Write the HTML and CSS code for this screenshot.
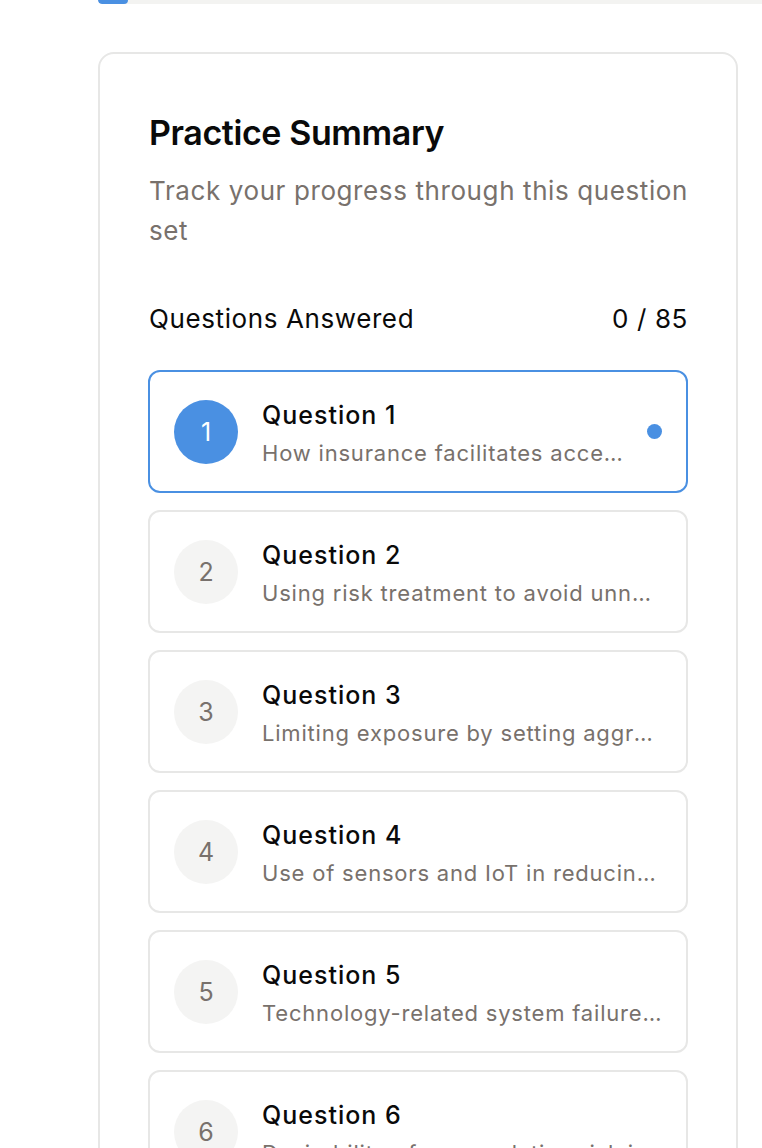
FILE: index.html
```html
<!DOCTYPE html>
<html lang="en">
<head>
<meta charset="utf-8">
<title>Practice Summary</title>
<link rel="stylesheet" href="styles.css">
</head>
<body>
<div class="page">
  <div class="progress"><div class="progress-fill" style="width: 30px"></div></div>
  <section class="card">
    <h2 class="card-title">Practice Summary</h2>
    <p class="card-sub">Track your progress through this question set</p>
    <div class="stat-row">
      <span>Questions Answered</span>
      <span>0 / 85</span>
    </div>
    <ul class="q-list">
      <li class="q-item active">
        <span class="q-num">1</span>
        <div class="q-text">
          <div class="q-title">Question 1</div>
          <div class="q-desc">How insurance facilitates access to credit and investment</div>
        </div>
        <span class="q-dot"></span>
      </li>
      <li class="q-item">
        <span class="q-num">2</span>
        <div class="q-text">
          <div class="q-title">Question 2</div>
          <div class="q-desc">Using risk treatment to avoid unnecessary losses</div>
        </div>
      </li>
      <li class="q-item">
        <span class="q-num">3</span>
        <div class="q-text">
          <div class="q-title">Question 3</div>
          <div class="q-desc">Limiting exposure by setting aggregate limits</div>
        </div>
      </li>
      <li class="q-item">
        <span class="q-num">4</span>
        <div class="q-text">
          <div class="q-title">Question 4</div>
          <div class="q-desc">Use of sensors and IoT in reducing losses</div>
        </div>
      </li>
      <li class="q-item">
        <span class="q-num">5</span>
        <div class="q-text">
          <div class="q-title">Question 5</div>
          <div class="q-desc">Technology-related system failures and outages</div>
        </div>
      </li>
      <li class="q-item">
        <span class="q-num">6</span>
        <div class="q-text">
          <div class="q-title">Question 6</div>
          <div class="q-desc">Desirability of accumulation risk in portfolios</div>
        </div>
      </li>
    </ul>
  </section>
</div>
</body>
</html>
```

FILE: styles.css
```css
* { box-sizing: border-box; }
html, body { margin: 0; padding: 0; background: #ffffff; }
body {
  font-family: Inter, "Noto Sans", sans-serif;
  color: #0a0a0a;
  overflow: hidden;
  height: 1148px;
}
.page {
  padding-left: 98px;
}
.progress {
  height: 8px;
  margin-top: -4px;
  background: #f3f3f1;
  border-radius: 4px 0 0 4px;
  overflow: hidden;
}
.progress-fill {
  height: 100%;
  background: #4a90e2;
  border-radius: 4px;
}
.card {
  width: 640px;
  margin-top: 48px;
  border: 2px solid #e7e7e6;
  border-radius: 16px;
  padding: 48px 48px 48px 49px;
}
.card-title {
  margin: 7px 0 0 0;
  font-size: 34px;
  line-height: 48px;
  font-weight: 600;
  letter-spacing: -0.4px;
}
.card-sub {
  margin: 14px 0 0 0;
  font-size: 26px;
  line-height: 40px;
  letter-spacing: 0.6px;
  color: #78716c;
}
.stat-row {
  margin-top: 50px;
  display: flex;
  justify-content: space-between;
  font-size: 26px;
  line-height: 36px;
  letter-spacing: 0.6px;
}
.q-list {
  list-style: none;
  margin: 33px 0 0 -1px;
  padding: 0;
  display: flex;
  flex-direction: column;
  gap: 17px;
}
.q-item {
  display: flex;
  align-items: center;
  gap: 24px;
  height: 123px;
  padding: 0 24px;
  border: 2px solid #e7e7e6;
  border-radius: 12px;
}
.q-item.active {
  border-color: #4a90e2;
}
.q-num {
  flex: none;
  width: 64px;
  height: 64px;
  border-radius: 50%;
  background: #f4f4f3;
  color: #78716c;
  font-size: 25px;
  display: flex;
  align-items: center;
  justify-content: center;
}
.q-item.active .q-num {
  background: #4a90e2;
  color: #ffffff;
}
.q-text {
  flex: 1;
  min-width: 0;
  padding-top: 2px;
}
.q-title {
  font-size: 25px;
  line-height: 36px;
  font-weight: 500;
  letter-spacing: 1px;
}
.q-desc {
  margin-top: 5px;
  font-size: 22px;
  line-height: 30px;
  letter-spacing: 0.8px;
  color: #78716c;
  white-space: nowrap;
  overflow: hidden;
  text-overflow: ellipsis;
}
.q-dot {
  flex: none;
  width: 15px;
  height: 15px;
  border-radius: 50%;
  background: #4a90e2;
}
```
